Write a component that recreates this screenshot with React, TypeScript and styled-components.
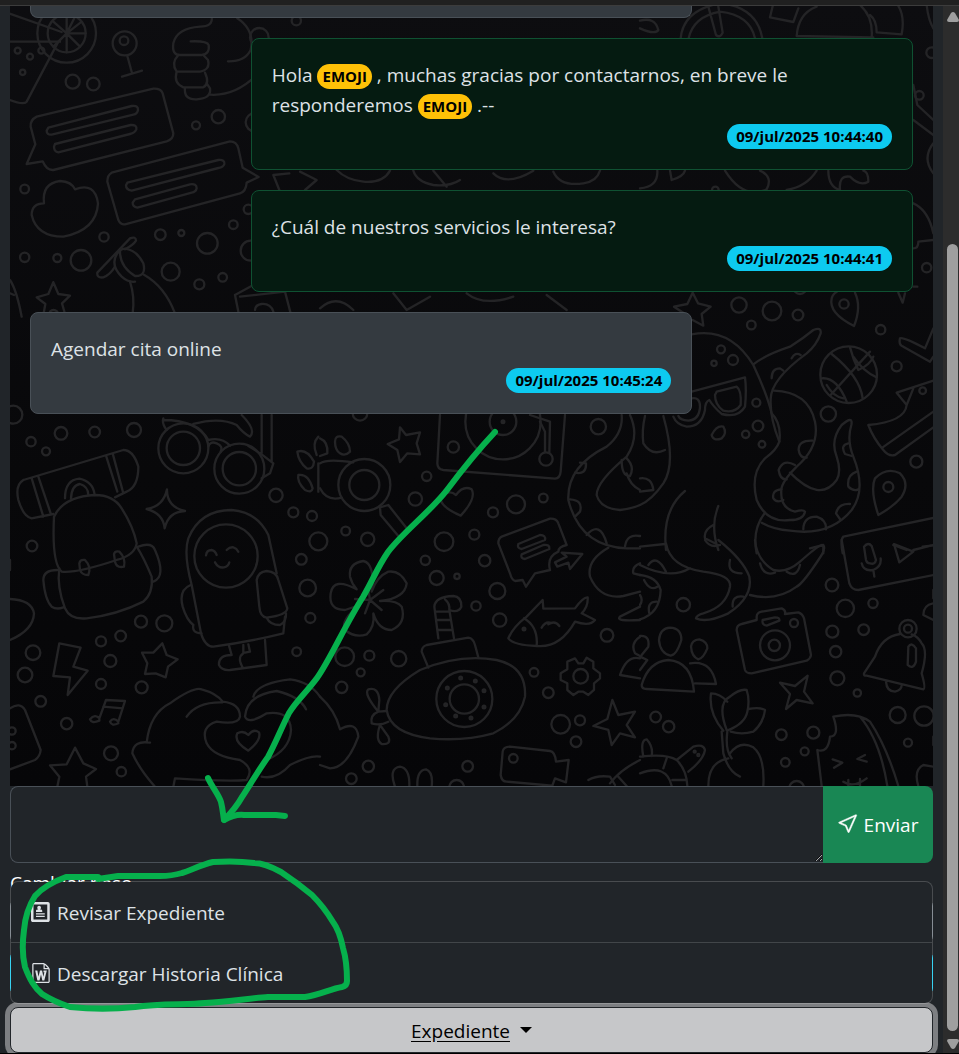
import React from "react";
import styled, { createGlobalStyle } from "styled-components";
import { ImProfile, ImFileWord } from "react-icons/im";
import { BsCursor } from "react-icons/bs";

const GlobalStyle = createGlobalStyle`
  *, *::before, *::after { box-sizing: border-box; }
  body {
    margin: 0;
    background: #212529;
    color: #dee2e6;
    font-family: "Segoe UI", "Open Sans", "Noto Sans", sans-serif;
    font-size: 19px;
    line-height: 30px;
  }
  button, textarea, select { font: inherit; color: inherit; margin: 0; }
`;

const Page = styled.div`
  position: relative;
  display: flex;
  flex-direction: column;
  height: 100vh;
  min-height: 640px;
  overflow: hidden;
  border-bottom: 1px solid #000;
`;

const TopEdge = styled.div`
  flex: none;
  height: 6px;
  background: #202020;
  border-bottom: 1px solid #3c3c3c;
`;

const Body = styled.div`
  flex: 1;
  min-height: 0;
  display: grid;
  grid-template-columns: minmax(0, 1fr) 16px;
`;

const Main = styled.main`
  display: flex;
  flex-direction: column;
  min-height: 0;
  padding: 0 10px;
`;

const Chat = styled.section`
  position: relative;
  flex: 1;
  min-height: 0;
  overflow: hidden;
  background: linear-gradient(#0d0d10, #08080a 60%, #060608);
`;

const Wallpaper = styled.svg`
  position: absolute;
  inset: 0;
  width: 100%;
  height: 100%;
  fill: none;
  stroke: #242426;
  stroke-linecap: round;
  stroke-linejoin: round;
`;

const Messages = styled.div`
  position: relative;
  display: flex;
  flex-direction: column;
  gap: 20px;
  padding: 0 20px;
`;

const Bubble = styled.article<{ $own?: boolean }>`
  width: 75%;
  padding: 21px 20px 19px;
  border: 1px solid ${(p) => (p.$own ? "#0f5132" : "#495057")};
  border-radius: 8px;
  background: ${(p) => (p.$own ? "#051b11" : "#343a40")};
  align-self: ${(p) => (p.$own ? "flex-end" : "flex-start")};
`;

const BubbleEnd = styled(Bubble)`
  height: 12px;
  padding: 0;
  border-top: 0;
  border-radius: 0 0 8px 8px;
`;

const Text = styled.p`
  margin: 0;
`;

const Stamp = styled.div`
  display: flex;
  justify-content: flex-end;
  align-items: center;
  height: 30px;
  padding-top: 2px;
`;

const Badge = styled.span<{ $tone: "info" | "warning" }>`
  display: inline-block;
  padding: ${(p) => (p.$tone === "info" ? "0 9px" : "0 5px")};
  border-radius: 13px;
  background: ${(p) => (p.$tone === "info" ? "#0dcaf0" : "#ffc107")};
  color: #000;
  font-size: 15px;
  font-weight: 700;
  line-height: 25px;
  white-space: nowrap;
`;

const Composer = styled.form`
  flex: none;
  display: flex;
  height: 77px;
`;

const Draft = styled.textarea`
  flex: 1;
  min-width: 0;
  padding: 8px 16px;
  border: 1px solid #495057;
  border-right: 0;
  border-radius: 8px 0 0 8px;
  background: #212529;
  outline: none;
  resize: vertical;
  color-scheme: dark;
`;

const Send = styled.button`
  display: flex;
  align-items: center;
  justify-content: center;
  gap: 5px;
  width: 110px;
  padding: 0;
  border: 0;
  border-radius: 0 8px 8px 0;
  background: #198754;
  color: #fff;

  svg { margin-bottom: 4px; }
`;

const Actions = styled.div`
  flex: none;
  display: flex;
  flex-direction: column;
  padding-top: 5px;
`;

const StepLabel = styled.label`
  color: #fff;
`;

const StepSelect = styled.select`
  height: 46px;
  border: 1px solid #6c757d;
  border-radius: 8px;
  background: #212529;
  appearance: none;
`;

const OutlineButton = styled.button`
  height: 46px;
  margin-top: 6px;
  border: 1px solid #0dcaf0;
  border-radius: 8px;
  background: #212529;
`;

const Dropup = styled.div`
  position: relative;
  margin-top: 11px;
`;

const Toggle = styled.button`
  display: flex;
  align-items: center;
  justify-content: center;
  gap: 10px;
  width: 100%;
  height: 46px;
  padding: 2px 0 0;
  border: 1px solid #212529;
  border-radius: 8px;
  background: #c6c7c9;
  color: #000;
  text-decoration: underline;
  text-underline-offset: 3px;
  box-shadow: 0 0 0 5px #7d7f82;
`;

const Caret = styled.span`
  margin-bottom: 2px;
  border: 6px solid transparent;
  border-top-color: #000;
  border-bottom: 0;
`;

const Menu = styled.ul`
  position: absolute;
  left: 0;
  right: 0;
  bottom: 100%;
  margin: 0 0 3px;
  padding: 0;
  list-style: none;
  border: 1px solid rgba(255, 255, 255, 0.18);
  border-radius: 8px;
  background: #212529;
  background-clip: padding-box;
`;

const MenuItem = styled.li`
  & + & { border-top: 1px solid #424649; }
`;

const MenuLink = styled.a`
  display: flex;
  align-items: center;
  gap: 6px;
  height: 60px;
  padding: 2px 20px 0;
  color: #dee2e6;
  text-decoration: none;

  svg { margin-bottom: 2px; }
`;

const Scrollbar = styled.div`
  display: flex;
  flex-direction: column;
  align-items: center;
  padding: 6px 1px 4px 4px;
  background: #2c2c2c;
`;

const Arrow = styled.svg`
  flex: none;
  width: 12px;
  height: 10px;
  fill: #9f9f9f;
`;

const TrackSpace = styled.div`
  flex: 222;
`;

const Thumb = styled.div`
  flex: 787;
  width: 11px;
  margin-bottom: 8px;
  border-radius: 6px;
  background: #9f9f9f;
`;

const Ink = styled.svg`
  position: absolute;
  left: 0;
  top: 0;
  pointer-events: none;
  fill: none;
  stroke: #06b04c;
  stroke-width: 6;
  stroke-linecap: round;
  stroke-linejoin: round;
`;

type Dot = [number, number, number];

type Patch = { x: number; y: number; dots: Dot[]; lines: string[] };

// The wallpaper is drawn in patches at three times their final size.
const patches: Patch[] = [
  {
    x: 0,
    y: 0,
    dots: [
      [218, 245, 21], [280, 252, 19], [588, 376, 12], [655, 350, 20], [74, 567, 13], [312, 711, 14],
      [172, 774, 12], [74, 772, 14], [243, 781, 31], [481, 704, 16], [544, 699, 9], [622, 730, 31],
      [700, 674, 13], [512, 815, 27], [668, 832, 13], [598, 853, 15], [745, 628, 14], [752, 752, 30],
      [765, 367, 28], [889, 62, 14], [374, 130, 36], [372, 122, 13], [200, 100, 88], [200, 100, 57],
      [53, 152, 9], [90, 170, 9], [124, 152, 9], [68, 217, 8], [778, 112, 28],
    ],
    lines: [
      "M20 38L185 96M20 125H180M175 125L80 305Q70 316 30 300",
      "M200 100V45M200 100L245 65M200 100H257M200 100L240 140M200 100V157M200 100L160 140M200 100L160 65M200 100L225 50",
      "M382 168L396 219M366 230L426 212",
      "M635 50Q640 80 600 80Q530 85 520 130Q515 165 540 165H605Q630 162 626 135Q622 122 572 124",
      "M535 165Q512 190 530 215H600Q632 208 624 180L610 165M530 215Q520 250 550 262H610Q630 250 615 218M555 262Q550 300 590 298Q635 295 630 265L620 250",
      "M712 55Q765 90 752 150Q735 185 684 184M630 284Q710 290 780 215",
      "M110 350L460 266Q483 265 488 280L520 400Q520 418 500 424L160 510Q140 512 128 484L80 492L106 433L92 380Q90 360 110 350Z",
      "M145 383L395 318Q415 315 414 330Q412 342 400 344L155 404Q140 405 140 392Z",
      "M165 432L392 375Q412 374 409 388Q405 398 390 402L175 457Q162 455 162 440Z",
      "M335 518L690 424Q710 424 715 445L728 503L776 531L740 548Q738 575 720 580L375 673Q362 675 355 660L322 545Q322 525 335 518Z",
      "M382 548L655 480Q675 478 673 492Q670 502 655 504L395 572Q378 570 378 556Z",
      "M405 598L570 553Q590 550 590 565Q588 576 575 578L412 623Q398 620 398 608Z",
      "M132 610Q125 550 180 543Q215 545 225 568Q285 545 294 610Q290 690 190 710Q110 710 95 645Q95 610 132 610Z",
      "M292 818L390 715Q408 708 408 722Q400 735 375 748M292 818Q290 835 310 832Q330 825 345 800",
      "M358 752Q325 790 365 830Q385 848 405 845M360 755Q360 800 405 828Q440 830 430 790Q410 750 375 746Q360 748 360 755Z",
      "M390 845Q405 890 398 940M432 824Q495 860 525 940",
      "M160 847L175 882L210 887L186 910L196 945M160 847L145 882L110 892L136 912L130 945M150 935Q160 925 172 935",
      "M30 840Q50 870 65 950M30 880L42 885",
      "M705 885L760 855M705 885L720 960M720 890L855 875L872 940M765 930Q765 915 785 912Q812 910 820 935",
      "M820 525L868 520M820 525L838 570M900 515L950 540L915 570",
      "M1010 510Q1040 540 1090 545Q1150 550 1170 512M1240 512Q1250 545 1300 555Q1350 560 1380 540M1300 512L1340 560M1480 520Q1520 560 1600 512M1660 515Q1680 560 1750 550Q1790 545 1800 512M960 925Q1010 880 1060 930M1180 880L1220 930L1290 890M1400 880Q1450 920 1540 890M1640 885L1700 930",
    ],
  },
  {
    x: 640,
    y: 0,
    dots: [
      [875, 158, 16], [860, 803, 14], [297, 915, 23], [396, 933, 28], [474, 945, 16], [480, 862, 20],
      [838, 286, 13], [226, 570, 10],
    ],
    lines: [
      "M122 115Q130 30 240 10Q350 20 367 115M146 115Q160 50 240 35Q330 45 345 115M205 20L228 105Q240 115 248 98L235 20",
      "M0 62Q45 50 55 90Q45 105 0 85M400 10L390 52L460 66L475 25M470 108L700 112M470 108Q475 40 530 20M695 112Q700 50 660 15M710 97L785 103Q795 50 775 18M710 97Q710 60 690 45",
      "M860 15Q865 60 880 85M820 255L832 315L880 360M820 360L880 405M880 430Q845 475 880 520",
      "M0 565Q55 560 52 512M95 540Q130 530 135 512M95 540L90 512M255 512Q310 600 380 568Q400 530 360 512M440 570Q500 560 530 512M565 512Q565 560 600 570Q595 525 630 530Q660 560 685 545Q685 515 670 512",
      "M820 610Q865 630 880 700M820 745Q835 745 835 725L880 720M820 860H832M775 878L788 908L795 880",
    ],
  },
  {
    x: 640,
    y: 290,
    dots: [
      [334, 105, 13], [722, 119, 14], [770, 229, 15], [243, 178, 12], [279, 210, 15], [222, 220, 8],
      [349, 338, 12], [354, 408, 16], [317, 433, 11], [366, 463, 10], [565, 372, 23], [829, 515, 18],
      [745, 591, 15], [848, 302, 10], [612, 42, 14], [626, 254, 85],
    ],
    lines: [
      "M158 8L174 40L212 50L185 72L190 107L158 90M158 8L142 42L102 50L132 70",
      "M575 25Q565 70 642 108Q665 50 645 8M575 25Q580 10 590 6",
      "M780 145Q790 140 855 175L880 115M780 145Q775 165 790 170L870 215L880 200",
      "M155 133Q270 110 340 225Q380 310 395 370Q425 400 418 455Q410 480 375 505Q330 550 350 630Q380 700 450 690Q490 690 495 665Q490 658 465 665Q420 655 424 600Q425 575 470 530Q540 470 525 395Q505 305 402 302",
      "M340 223Q375 195 450 170Q490 145 520 120Q545 110 542 130Q530 165 500 190Q390 270 392 330Q390 385 418 455",
      "M450 548Q540 640 590 570Q605 545 590 500Q570 450 605 405Q640 375 634 405Q620 450 640 500Q680 600 635 660Q570 740 450 722Q400 718 365 698",
      "M395 265Q395 235 420 235L430 242M455 205Q465 185 482 195M518 452Q475 450 476 480Q480 505 500 503M465 525Q430 505 416 540Q420 570 440 568M424 598Q395 600 400 625Q410 640 430 630M625 460Q600 465 615 492L635 498M650 545Q620 555 625 590Q640 605 655 598M630 642Q595 640 588 670L602 690M490 718Q490 680 530 680Q560 690 558 718",
      "M630 172Q640 210 655 240Q690 225 700 200M575 192Q660 260 668 325M545 265Q590 260 620 335M572 315Q630 250 690 185M640 200Q670 245 710 262M560 285Q580 320 610 325",
      "M155 305L315 262Q320 300 315 350Q295 385 245 372Q220 350 208 330Q195 335 195 360Q185 410 140 410Q110 405 100 380",
      "M230 305L290 290Q305 300 302 345Q285 370 250 362Q225 345 225 315ZM155 325Q180 320 180 350Q178 390 145 392Q120 390 115 378",
      "M215 435Q230 405 250 410Q262 430 245 445Q220 455 215 435M15 378Q5 420 10 460Q35 500 75 480M70 378Q110 520 70 580Q35 630 0 645M0 565Q35 560 40 600L0 605",
      "M770 308L880 272M770 308L800 345L820 295M800 345Q795 395 685 405Q700 445 730 480Q745 500 765 495L880 412M728 472L880 365",
      "M715 675Q690 600 705 565Q740 530 780 550Q810 580 785 620Q760 650 715 675Z",
      "M610 740L880 684M610 740Q600 750 608 790M135 603Q65 660 78 780M235 648Q210 710 235 780M220 705Q190 720 195 745L235 765M375 668Q335 720 350 790M510 775L550 765V790M760 765L800 780M820 780L880 765",
    ],
  },
  {
    x: 0,
    y: 400,
    dots: [
      [40, 44, 27], [93, 125, 14], [138, 154, 12], [183, 100, 19], [284, 96, 16], [402, 90, 21],
      [96, 438, 16], [828, 286, 20], [880, 337, 15], [936, 348, 15], [955, 424, 27], [904, 478, 16],
      [923, 564, 25], [931, 654, 15], [890, 755, 13], [423, 665, 18], [493, 670, 24], [362, 708, 16],
      [303, 724, 15], [331, 783, 18], [303, 852, 15], [425, 862, 18], [99, 758, 22], [75, 825, 22],
      [122, 904, 16], [200, 971, 17], [333, 1060, 21], [364, 1115, 14], [550, 145, 50], [550, 145, 75],
      [718, 206, 50], [718, 206, 75], [678, 468, 95], [36, 993, 11], [36, 1037, 11],
    ],
    lines: [
      "M70 240L370 150Q400 150 415 200Q415 260 380 275L345 292M70 240Q45 255 55 300Q70 350 95 355L160 342M95 235L130 350M115 230L152 340M318 167L352 275M338 160L370 280",
      "M195 295Q195 240 238 236Q280 245 284 285M213 295Q215 255 240 252Q265 260 265 285",
      "M162 350Q190 290 285 285Q340 285 365 325Q400 380 410 430Q405 465 350 480Q230 520 185 515Q155 490 162 350Z",
      "M178 505Q170 560 195 625Q210 660 260 655Q350 645 430 605Q460 580 455 530Q430 470 410 440M172 510Q130 510 130 540Q135 600 155 620Q170 630 190 622M415 440Q455 425 465 450Q500 530 460 545",
      "M238 490Q240 478 255 480Q275 500 265 525Q245 525 240 510ZM342 462Q345 452 358 455Q378 475 372 500Q350 505 345 485Z",
      "M501 268Q500 320 555 333Q505 335 494 385Q490 340 440 327Q490 320 501 268Z",
      "M490 55Q485 70 500 90M625 140Q630 122 650 130Q670 138 662 155M785 235L810 220L820 190Q780 158 745 138M690 137Q665 110 625 120Q590 60 490 60M580 72Q660 50 710 75Q730 100 750 110Q770 90 725 45M785 45V160M815 45V185",
      "M892 155Q920 145 942 185Q940 210 920 205Q895 185 892 155ZM895 225Q925 220 938 265Q935 280 915 270Q890 245 895 225ZM955 110Q935 130 950 165M955 190V275",
      "M575 555Q550 460 565 415Q600 330 695 330Q770 335 805 405L830 520M575 555L603 700Q615 740 640 740Q750 725 850 700L855 650M572 555Q535 570 548 620Q560 660 580 675M580 675Q575 700 605 700",
      "M770 540Q775 515 800 513Q830 515 835 540L862 625Q860 645 800 653Q780 650 778 620ZM800 653Q810 675 840 675Q860 665 858 640",
      "M618 466Q620 450 635 450Q645 452 650 465M680 450Q690 440 700 442Q710 445 715 455M645 487Q655 505 672 502Q685 500 688 487",
      "M687 737L695 765Q655 765 657 795Q665 812 690 810L800 795L795 720M730 735V760Q715 770 722 790L728 803M745 733L750 755L735 758",
      "M178 730L242 743L220 800L263 812L203 885L210 832L160 828Z",
      "M487 730L500 765L533 778L504 800L497 832L467 820L435 822L442 790L426 758L460 758Z",
      "M298 955L318 900L375 903L355 965M310 920L368 925M298 955Q285 940 270 958Q275 972 298 962ZM355 965Q340 950 330 965Q335 980 355 970",
      "M30 925Q60 905 75 930L122 1050Q120 1070 105 1080L30 1108",
      "M225 1043L250 1090L288 1107L258 1130L262 1160M225 1043L200 1093L150 1096L178 1130L172 1160",
      "M440 1028Q450 940 510 910Q580 860 605 868Q650 880 668 905Q720 910 720 950Q715 975 650 965Q600 980 620 1030Q640 1070 720 1080Q765 1105 740 1140Q680 1145 525 1135L520 1160M560 950Q590 905 668 907M450 1028Q400 1020 397 1060Q420 1110 465 1160",
      "M760 890Q770 850 870 838Q930 845 960 890M735 950Q740 885 830 873Q900 890 918 928M735 950Q745 975 800 940Q870 930 873 990Q870 1050 800 1080M785 1130Q830 1140 870 1095Q930 1065 960 1070",
      "M745 1052Q700 1025 712 1000Q730 990 745 1005Q760 985 777 997Q785 1020 745 1052Z",
      "M30 597Q95 600 102 640Q100 690 30 720M30 480V510",
    ],
  },
  {
    x: 320,
    y: 400,
    dots: [
      [120, 40, 22], [400, 141, 17], [320, 229, 14], [286, 297, 20], [588, 313, 27], [519, 337, 15],
      [670, 294, 13], [835, 80, 23], [77, 393, 13], [143, 418, 20], [372, 425, 28], [463, 404, 15],
      [316, 481, 14], [494, 482, 17], [350, 534, 21], [411, 529, 8], [532, 573, 24], [468, 618, 14],
      [539, 660, 20], [74, 770, 28], [148, 767, 15], [236, 776, 23], [122, 817, 12], [65, 862, 17],
      [642, 817, 13], [685, 878, 16], [722, 973, 28], [780, 961, 15], [768, 1025, 16], [861, 706, 19],
      [145, 1099, 17], [94, 1136, 16], [443, 1099, 16], [410, 1162, 22], [580, 1075, 13],
      [782, 829, 22], [549, 65, 40], [549, 65, 4], [549, 65, 113], [678, 177, 20], [133, 255, 78],
      [133, 255, 45], [433, 897, 84], [433, 897, 44], [422, 834, 4], [466, 843, 4], [492, 872, 4],
      [492, 921, 4], [453, 954, 4], [407, 948, 4], [377, 914, 4], [382, 864, 4], [612, 687, 4],
    ],
    lines: [
      "M360 45L352 190Q352 208 370 210L705 236Q720 235 722 215L735 45M660 65L675 95V155M630 45L690 65L688 158",
      "M240 82L258 105L300 97L290 130L300 163L262 160L240 186L232 150L203 132L237 118Z",
      "M45 125Q45 105 65 110Q90 130 90 155Q75 170 60 160Q45 150 45 125ZM0 115Q25 125 22 160L0 168M0 190Q20 175 100 187M0 265Q20 305 65 293",
      "M180 322L205 315L260 385M180 322L182 345L235 408",
      "M422 347Q360 320 362 295Q385 265 408 285Q430 255 455 268Q470 295 422 347Z",
      "M545 410L690 356Q710 355 715 370L740 435Q715 440 715 455Q680 470 690 510L645 520L618 560L608 540L585 543Q575 540 570 520L535 430Q535 415 545 410Z",
      "M595 432L660 405Q678 405 675 420L605 447Q590 445 595 432ZM605 463L670 435Q690 432 688 447L615 477Q600 475 605 463Z",
      "M705 487L740 470L725 458L787 462L750 507L745 488L712 500Z",
      "M155 575Q165 490 130 483Q85 490 90 530Q95 550 110 568Q40 530 32 580Q25 630 75 630L120 615Q60 660 75 690Q105 715 140 703Q165 680 160 640Q175 690 215 690Q260 670 245 620Q230 600 180 603Q255 595 260 550Q240 510 205 515Q170 530 155 575Z",
      "M150 600L105 597M150 600L190 570M150 600L185 630M150 600L135 640M150 600L145 570",
      "M355 715L343 620Q345 590 400 588Q425 590 424 620Q415 640 388 630L402 715M345 635H385M350 660H390M355 690H398M375 598Q390 610 388 630",
      "M325 803L305 755Q305 740 320 735L445 713Q460 715 465 735L475 772",
      "M200 930Q200 870 300 810Q420 760 530 780Q620 800 615 890Q600 960 520 1000Q430 1025 330 1015Q210 1000 200 930Z",
      "M175 935Q130 880 145 868Q175 860 178 900ZM175 935Q150 945 155 970Q180 978 205 965M180 975Q165 1020 185 1032Q215 1035 205 1010ZM175 935L200 933",
      "M565 715Q580 680 620 650L668 600L670 626L765 625Q790 590 803 592Q805 620 785 640L825 660Q810 680 765 665Q720 745 650 738Q580 735 565 715ZM612 655Q655 680 650 738M665 683Q675 665 690 668M685 673Q705 660 718 678",
      "M765 775L775 790H790L800 773L820 785V805L840 820V835L822 850V870L805 885L790 875H775L760 885L742 870V850L722 840V820L742 808V785Z",
      "M877 900L895 945L945 935L920 975L945 1012L900 1000L875 1035L865 990L820 978L862 957Z",
      "M542 1125L548 1055Q550 1040 570 1040L690 1053Q705 1055 708 1085L746 1080L738 1147L705 1135L697 1157L560 1145Q545 1145 542 1125Z",
      "M225 1160Q205 1105 240 1100Q270 1105 268 1160M292 1160Q290 1110 318 1108Q340 1115 335 1160",
      "M0 890Q45 930 60 988Q110 960 115 1010Q80 1105 30 1105L0 1095",
      "M905 45Q910 100 860 140Q740 200 745 300Q780 440 920 445H960M930 45Q960 110 920 170Q830 245 830 285Q840 325 900 330Q940 325 960 315M905 180Q905 230 930 228Q945 200 920 175M920 220Q930 255 960 270",
      "M765 218Q800 225 798 190L780 188M750 298Q790 300 780 335L765 350M800 405Q840 360 860 430M915 440Q920 400 960 408M865 443Q800 480 810 530Q840 600 910 588L960 575M960 490Q935 500 940 520L960 525M960 620L900 650Q885 665 960 660M960 710Q930 730 945 760L960 768M960 775Q920 765 900 825L960 835",
      "M805 1140Q830 1125 870 1130L885 1155M870 1150Q900 1110 960 1080M895 1130L920 1158",
    ],
  },
  {
    x: 640,
    y: 540,
    dots: [
      [130, 194, 20], [576, 135, 19], [616, 205, 26], [699, 190, 14], [577, 275, 18], [671, 269, 16],
      [587, 335, 17], [592, 415, 21], [652, 459, 11], [773, 525, 24], [852, 528, 29], [804, 608, 12],
      [47, 531, 16], [86, 560, 17], [424, 584, 16], [520, 578, 18], [494, 634, 12], [436, 667, 13],
      [470, 745, 22], [804, 266, 26], [804, 266, 12], [405, 316, 45], [403, 316, 17], [462, 249, 12],
      [164, 635, 3], [175, 645, 3],
    ],
    lines: [
      "M0 20L75 12M78 10Q90 80 190 95Q275 105 270 140Q260 200 190 220Q170 225 168 235Q200 250 265 220Q340 170 328 110Q310 60 235 0M0 75Q90 120 150 85M25 75Q50 40 78 95M270 60Q260 100 305 100M310 170Q275 165 278 200M195 0Q210 25 240 15",
      "M345 0Q350 60 400 90Q440 100 480 65Q530 20 545 15Q560 18 545 45Q490 130 470 140Q410 185 330 165M360 70Q370 110 405 98M440 95Q470 115 480 75",
      "M605 0L628 130Q635 150 655 150L880 105M672 20Q685 5 695 18L708 60Q705 75 690 70Q680 70 678 60ZM665 70Q670 95 700 90Q725 80 722 55M700 90L703 110M762 12L820 35L778 67ZM848 20L880 16",
      "M0 105Q50 110 62 150Q60 220 0 238M12 120Q30 155 52 140M50 185Q20 185 28 220M0 165Q10 180 0 195",
      "M350 240V230Q350 218 365 215L425 205Q438 210 435 222L475 217Q488 222 492 235L513 345Q512 355 500 362L335 400Q318 400 315 390L290 270Q290 255 305 252ZM368 240L405 232Q420 232 418 242L380 257Q365 255 368 240Z",
      "M90 263Q125 265 124 300Q110 345 92 347Q60 340 57 300Q60 265 90 263ZM178 298Q203 305 202 325Q190 355 175 358Q155 350 153 320Q155 300 178 298ZM5 435Q25 365 85 360Q155 365 162 455L20 447Q5 447 5 435M150 370Q215 360 228 432L165 430M0 288Q30 285 25 320L5 345M0 350L22 360L0 390",
      "M420 428L465 438L503 407L492 455L518 490L470 480L438 507L450 462Z",
      "M780 282Q725 290 705 350L672 400Q670 408 680 407L850 448Q858 445 845 400Q865 330 845 310Q835 290 815 283M738 425Q740 455 765 455Q785 450 785 435M805 320Q815 305 828 325V365Q820 390 803 375Z",
      "M250 572Q205 520 213 460Q240 460 262 485M260 570Q230 490 270 470Q300 445 320 450Q330 480 322 515Q315 550 265 570M325 507Q360 500 375 510Q370 550 340 575Q305 585 272 575M245 575L250 640Q265 695 300 710M262 575Q255 630 275 655M205 738Q205 665 265 655M270 640Q300 600 340 622Q375 650 370 738",
      "M580 530Q650 515 690 545Q740 620 775 738M660 530Q720 600 742 738M580 530Q600 590 570 590Q565 640 532 630L545 738M578 658L607 668L582 683M675 645L652 657L680 665M610 725Q640 745 680 715M625 720V738M660 717V738",
      "M0 650Q80 640 110 660Q140 690 142 738M10 650Q0 600 20 598Q40 620 35 648M110 660L160 620Q190 610 195 630Q190 660 145 695M80 655L70 685M0 700Q80 670 95 738M97 720H135M880 680L850 675Q820 690 835 738M880 190Q850 195 850 225L880 240M880 150V175M880 590V615",
    ],
  },
];

function Doodles() {
  return (
    <Wallpaper viewBox="10 6 923 780" preserveAspectRatio="xMinYMax slice" aria-hidden="true">
      {patches.map((patch, i) => (
        <g key={i} transform={`translate(${patch.x} ${patch.y}) scale(0.33333)`} strokeWidth={7}>
          {patch.dots.map(([cx, cy, r], k) => (
            <circle key={k} cx={cx} cy={cy} r={r} />
          ))}
          {patch.lines.map((d, k) => (
            <path key={k} d={d} />
          ))}
        </g>
      ))}
    </Wallpaper>
  );
}

export default function App() {
  return (
    <>
      <GlobalStyle />
      <Page>
        <TopEdge />
        <Body>
          <Main>
            <Chat>
              <Doodles />
              <Messages>
                <BubbleEnd />
                <Bubble $own>
                  <Text>
                    Hola <Badge $tone="warning">EMOJI</Badge> , muchas gracias por contactarnos, en breve le
                    responderemos <Badge $tone="warning">EMOJI</Badge> .--
                  </Text>
                  <Stamp>
                    <Badge $tone="info">09/jul/2025 10:44:40</Badge>
                  </Stamp>
                </Bubble>
                <Bubble $own>
                  <Text>¿Cuál de nuestros servicios le interesa?</Text>
                  <Stamp>
                    <Badge $tone="info">09/jul/2025 10:44:41</Badge>
                  </Stamp>
                </Bubble>
                <Bubble>
                  <Text>Agendar cita online</Text>
                  <Stamp>
                    <Badge $tone="info">09/jul/2025 10:45:24</Badge>
                  </Stamp>
                </Bubble>
              </Messages>
            </Chat>
            <Composer onSubmit={(e) => e.preventDefault()}>
              <Draft aria-label="Mensaje" />
              <Send type="submit">
                <BsCursor size={21} strokeWidth={0.4} />
                Enviar
              </Send>
            </Composer>
            <Actions>
              <StepLabel htmlFor="paso">Cambiar paso</StepLabel>
              <StepSelect id="paso" />
              <OutlineButton type="button" aria-label="Actualizar" />
              <Dropup>
                <Toggle type="button" aria-expanded="true">
                  Expediente
                  <Caret />
                </Toggle>
                <Menu>
                  <MenuItem>
                    <MenuLink href="#revisar">
                      <ImProfile size={20} />
                      Revisar Expediente
                    </MenuLink>
                  </MenuItem>
                  <MenuItem>
                    <MenuLink href="#descargar">
                      <ImFileWord size={20} />
                      Descargar Historia Clínica
                    </MenuLink>
                  </MenuItem>
                </Menu>
              </Dropup>
            </Actions>
          </Main>
          <Scrollbar aria-hidden="true">
            <Arrow viewBox="0 0 12 10">
              <path d="M6 0Q7 0 8 1L12 8Q12 10 10 10H2Q0 10 0 8L4 1Q5 0 6 0Z" />
            </Arrow>
            <TrackSpace />
            <Thumb />
            <Arrow viewBox="0 0 12 10">
              <path d="M6 10Q7 10 8 9L12 2Q12 0 10 0H2Q0 0 0 2L4 9Q5 10 6 10Z" />
            </Arrow>
          </Scrollbar>
        </Body>
        <Ink width="959" height="1054" aria-hidden="true">
          <path d="M495 432C480 448 462 470 447 490C430 512 403 532 388 552C377 568 373 580 363 597C345 625 330 660 317 678C305 694 297 700 289 713C280 731 276 742 268 757C260 768 248 788 242 797C237 806 232 812 224 820" />
          <path d="M208 778C212 787 219 795 221 802C223 810 223 815 224 820Q235 814 244 815H276L285 816" />
          <path d="M98 877H66C55 881 42 888 35 896C28 907 25 918 24 930C22 945 22 955 25 967C30 980 34 987 42 994C53 1001 61 1004 70 1007C90 1009 115 1009 135 1007C160 1003 185 1005 205 1003C230 1002 250 998 268 997H305C320 995 330 989 342 987Q347 986 347 981C347 965 346 958 343 948C341 938 339 930 333 922C327 912 320 903 312 895C300 885 290 878 281 872C270 866 262 863 254 863C240 861 228 861 213 862C200 865 190 871 182 873C172 876 165 876 160 876H118L98 879" />
        </Ink>
      </Page>
    </>
  );
}
